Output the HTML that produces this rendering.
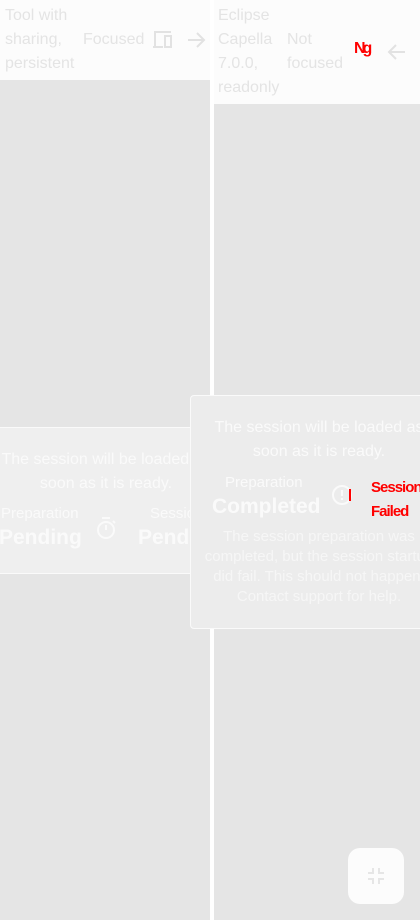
<!DOCTYPE html>
<html><head><style>
body{margin:0;width:420px;height:920px;background:#fff;position:relative;overflow:hidden;font-family:"Liberation Sans",sans-serif;}
.abs{position:absolute}
.hdr{background:#fcfcfc;color:#e4e4e4;font-size:16px;line-height:24px}
.gray{background:#e5e5e5}
.card{position:absolute;border:1px solid #fafafa;text-align:center;color:#fafafa;overflow:hidden}
.c{position:absolute;text-align:center;white-space:nowrap}
</style></head><body>
<div class="abs hdr" style="left:0;top:0;width:210px;height:80px"></div>
<div class="abs" style="left:5px;top:4px;color:#e4e4e4;font-size:16px;line-height:24px">Tool with<br>sharing,<br>persistent</div>
<div class="abs" style="left:83px;top:28px;color:#e4e4e4;font-size:16px;line-height:24px">Focused</div>
<svg class="abs" style="left:153px;top:29px" width="24" height="22" viewBox="0 0 24 22"><path d="M2 17V3h16M0 18h10M12 7h6v11h-6z" fill="none" stroke="#e2e2e2" stroke-width="2"/></svg>
<svg class="abs" style="left:186px;top:30px" width="20" height="20" viewBox="0 0 20 20"><path d="M2 10h15M11 3l7 7-7 7" fill="none" stroke="#e2e2e2" stroke-width="2"/></svg>
<div class="abs gray" style="left:0;top:80px;width:210px;height:840px"></div>

<div class="abs hdr" style="left:214px;top:0;width:206px;height:104px"></div>
<div class="abs" style="left:218px;top:4px;color:#e4e4e4;font-size:16px;line-height:24px">Eclipse<br>Capella<br>7.0.0,<br>readonly</div>
<div class="abs" style="left:287px;top:28px;color:#e4e4e4;font-size:16px;line-height:24px">Not<br>focused</div>
<div class="abs" style="left:354px;top:40px;color:red;font-size:16px;font-weight:bold;letter-spacing:-3px">Ng</div>
<svg class="abs" style="left:387px;top:42px" width="20" height="20" viewBox="0 0 20 20"><path d="M18 10H3M9 3l-7 7 7 7" fill="none" stroke="#e2e2e2" stroke-width="2"/></svg>
<div class="abs gray" style="left:214px;top:104px;width:206px;height:816px"></div>

<div class="card" style="left:-2px;top:427px;width:210px;height:145px;background:#efefef">
<div class="c" style="left:-40px;top:20px;width:294px;font-size:16px;line-height:24px">The session will be loaded as<br>soon as it is ready.</div>
<div class="c" style="left:2px;top:77px;font-size:15px;text-align:left">Preparation</div>
<div class="c" style="left:0;top:98px;font-size:21px;font-weight:bold">Pending</div>
<svg style="position:absolute;left:96px;top:88px" width="22" height="24" viewBox="0 0 22 24"><circle cx="11" cy="14" r="8" fill="none" stroke="#fafafa" stroke-width="2"/><path d="M7 2h8M11 14V9M18 5l2 2" stroke="#fafafa" stroke-width="2"/></svg>
<div class="c" style="left:151px;top:77px;font-size:15px">Session</div>
<div class="c" style="left:139px;top:98px;font-size:21px;font-weight:bold">Pending</div>
</div>

<div class="card" style="left:190px;top:395px;width:240px;height:232px;background:#ececec;border-radius:4px">
<div class="c" style="left:0;top:20px;width:256px;font-size:16px;line-height:24px">The session will be loaded as<br>soon as it is ready.</div>
<div class="c" style="left:34px;top:78px;font-size:15px">Preparation</div>
<div class="c" style="left:21px;top:99px;font-size:21px;font-weight:bold">Completed</div>
<svg style="position:absolute;left:140px;top:88px" width="24" height="24" viewBox="0 0 24 24"><circle cx="11" cy="11" r="9" fill="none" stroke="#fafafa" stroke-width="2"/><path d="M11 6v6M11 14v2" stroke="#fafafa" stroke-width="2"/><path d="M19 5v12" stroke="red" stroke-width="2"/></svg>
<div class="c" style="left:180px;top:80px;font-size:15px;font-weight:bold;color:red;line-height:24px;text-align:left;letter-spacing:-1px">Session<br>Failed</div>
<div class="c" style="left:0;top:131px;width:256px;font-size:15px;line-height:20px;color:#f6f6f6">The session preparation was<br>completed, but the session startup<br>did fail. This should not happen.<br>Contact support for help.</div>
</div>

<div class="abs" style="left:348px;top:848px;width:56px;height:56px;background:#fcfcfc;border-radius:12px"></div>
<svg class="abs" style="left:366px;top:866px" width="20" height="20" viewBox="0 0 20 20"><path d="M7 2v5H2M13 2v5h5M7 18v-5H2M13 18v-5h5" fill="none" stroke="#e6e6e6" stroke-width="2"/></svg>
</body></html>
